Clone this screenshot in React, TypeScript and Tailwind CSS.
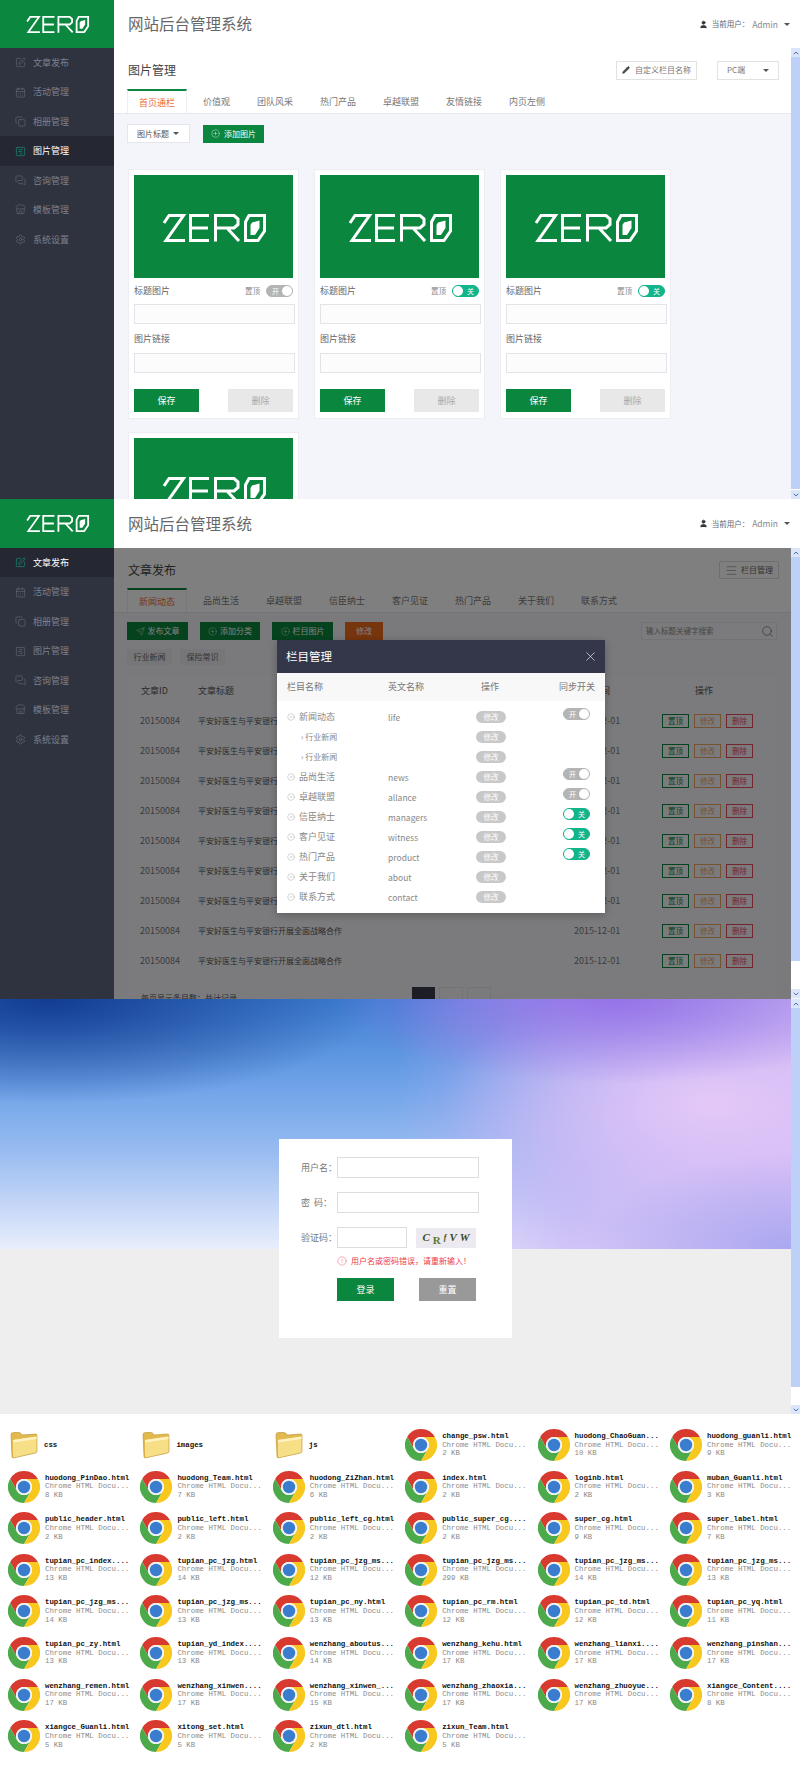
import React from "react";
import {
  SquarePen, CalendarDays, Copy, SquareChartGantt, MessagesSquare, Store, Settings,
  ChevronUp, ChevronDown, User, Pencil, CirclePlus, Send, Search, Menu, X, CircleAlert, CircleDot, CircleMinus,
} from "lucide-react";

const CJK = "font-['Noto_Sans_CJK_SC',sans-serif]";

function Logo({ className }: { className: string }) {
  return (
    <svg viewBox="0 0 104 28" className={className} fill="none" stroke="#fff" strokeWidth="3" strokeLinejoin="miter">
      <path d="M6 1.5H21.5L4 26.5H23" />
      <path d="M7 1.5L2 9" />
      <path d="M47 1.5H28.5V26.5H47M28.5 14H46" />
      <path d="M53.5 27.5V1.5H72L76 5V10.5L72 14H53.5M65 14L77 27" />
      <path d="M87 1.5H102.5V17L96 26.5H83.5V8Z" />
      <path d="M90 8.5L97.5 6.5V14L93 21H88.5V11Z" fill="#fff" stroke="none" />
    </svg>
  );
}

function Caret() {
  return <span className="inline-block border-x-[3px] border-t-[3px] border-x-transparent border-t-[#555]" />;
}

function Scrollbar({ thumb, gapBottom }: { thumb: string; gapBottom?: boolean }) {
  return (
    <div className="flex w-[9px] shrink-0 flex-col bg-[#f4f7fd]">
      <div className="flex h-[9px] items-center justify-center bg-[#dbe6fb]">
        <ChevronUp size={8} strokeWidth={3} className="text-[#4c6fae]" />
      </div>
      <div className={`${thumb} bg-[#bcd0f8]`} />
      <div className="flex-1 bg-white" />
      <div className={`flex h-[9px] items-center justify-center bg-[#dbe6fb] ${gapBottom ? "mb-[1px]" : ""}`}>
        <ChevronDown size={8} strokeWidth={3} className="text-[#4c6fae]" />
      </div>
    </div>
  );
}

const NAV: [string, React.ComponentType<any>][] = [
  ["文章发布", SquarePen],
  ["活动管理", CalendarDays],
  ["相册管理", Copy],
  ["图片管理", SquareChartGantt],
  ["咨询管理", MessagesSquare],
  ["模板管理", Store],
  ["系统设置", Settings],
];

function Sidebar({ active, headHeight }: { active: string; headHeight: string }) {
  return (
    <div className="flex w-[114px] shrink-0 flex-col bg-[#2f3340]">
      <div className={`flex ${headHeight} shrink-0 items-center justify-center bg-[#0b873f]`}>
        <Logo className="h-[17px] w-[65px]" />
      </div>
      <div className="flex flex-col">
        {NAV.map(([name, Icon]) => (
          <div
            key={name}
            className={`flex h-[29.45px] items-center gap-[7px] pl-[15px] text-[9px] ${
              name === active ? "bg-[#252833] text-white" : "text-[#7c808c]"
            }`}
          >
            <Icon size={11} strokeWidth={1.2} className={name === active ? "text-[#14a888]" : "text-[#6e727e]"} />
            <span>{name}</span>
          </div>
        ))}
      </div>
    </div>
  );
}

function Header({ height }: { height: string }) {
  return (
    <div className={`flex ${height} shrink-0 items-center justify-between bg-white pl-[14px] pr-[10px]`}>
      <span className="text-[15.5px] text-[#666]">网站后台管理系统</span>
      <div className="flex items-center text-[7.5px] text-[#666]">
        <User size={9} fill="#333" className="mr-[4px] text-[#333]" />
        <span>当前用户：</span>
        <span className="ml-[3px] mr-[6px] text-[8.5px] text-[#888]">Admin</span>
        <Caret />
      </div>
    </div>
  );
}

function Tabs({ items }: { items: string[] }) {
  return (
    <div className="flex h-[24px] items-end gap-[5px] pl-[13px]">
      {items.map((t, i) => (
        <div
          key={t}
          className={`flex h-[24px] items-center px-[11px] pt-[2px] text-[9px] ${
            i === 0 ? "border-t-2 border-x border-x-[#eeeef2] border-t-[#0b873f] bg-white px-[10px] text-[#ee6a34]" : "text-[#777]"
          }`}
        >
          {t}
        </div>
      ))}
    </div>
  );
}

function Toggle({ on }: { on: boolean }) {
  return on ? (
    <div className="flex h-[12px] w-[27px] items-center justify-between rounded-full border border-[#12b48a] bg-[#12b48a] text-[7px] leading-none text-white">
      <span className="h-[10px] w-[10px] rounded-full bg-white" />
      <span className="pr-[4px]">关</span>
    </div>
  ) : (
    <div className="flex h-[12px] w-[27px] items-center justify-between rounded-full border border-[#b4b4b4] bg-[#b4b4b4] text-[7px] leading-none text-white">
      <span className="pl-[5px]">开</span>
      <span className="h-[10px] w-[10px] rounded-full bg-white" />
    </div>
  );
}

function ImageCard({ on }: { on: boolean }) {
  return (
    <div className="w-[171px] border border-[#ededf3] bg-white px-[5px] pb-[6px] pt-[5px]">
      <div className="flex h-[103px] w-[159px] items-center justify-center bg-[#0b863f] pt-[3px]">
        <Logo className="h-[28px] w-[104px]" />
      </div>
      <div className="flex h-[18px] w-[159px] items-center justify-between pt-[8px] text-[9px] text-[#666]">
        <span>标题图片</span>
        <div className="flex items-center gap-[6px]">
          <span className="text-[7.5px] text-[#888]">置顶</span>
          <Toggle on={on} />
        </div>
      </div>
      <div className="mt-[8px] h-[20px] w-[161px] border border-[#e4e4e8] bg-[#fcfcfd]" />
      <div className="flex h-[29px] items-center text-[9px] text-[#666]">图片链接</div>
      <div className="h-[20px] w-[161px] border border-[#e4e4e8] bg-[#fcfcfd]" />
      <div className="mt-[16px] flex w-[159px] justify-between">
        <div className="flex h-[23px] w-[65px] items-center justify-center bg-[#0b863f] text-[9px] text-white">保存</div>
        <div className="flex h-[23px] w-[65px] items-center justify-center bg-[#e8e8e8] text-[9px] text-[#aaa]">删除</div>
      </div>
    </div>
  );
}

function PicturePage() {
  return (
    <div className={`flex h-[499px] overflow-hidden ${CJK}`}>
      <Sidebar active="图片管理" headHeight="h-[48px]" />
      <div className="flex min-w-0 flex-1 flex-col">
        <Header height="h-[48px]" />
        <div className="flex min-h-0 flex-1">
          <div className="min-w-0 flex-1 overflow-hidden bg-[#f4f5fa]">
            <div className="flex h-[66px] flex-col justify-between border-b border-[#e6e6ee] bg-white">
              <div className="flex items-center justify-between pl-[14px] pr-[12px] pt-[12px]">
                <span className="text-[12px] leading-[20px] text-[#444]">图片管理</span>
                <div className="flex items-center gap-[20px]">
                  <div className="flex h-[19px] w-[81px] items-center justify-center gap-[5px] border border-[#e2e2e2] text-[8px] text-[#777]">
                    <Pencil size={8} fill="#444" className="text-[#444]" />
                    <span>自定义栏目名称</span>
                  </div>
                  <div className="flex h-[19px] w-[62px] items-center justify-between border border-[#e2e2e2] px-[9px] text-[8px] text-[#777]">
                    <span>PC端</span>
                    <Caret />
                  </div>
                </div>
              </div>
              <Tabs items={["首页通栏", "价值观", "团队风采", "热门产品", "卓越联盟", "友情链接", "内页左侧"]} />
            </div>
            <div className="mt-[10px] flex items-center gap-[13px] pl-[13px]">
              <div className="flex h-[19px] w-[63px] items-center justify-between border border-[#e6e6ea] bg-white pl-[9px] pr-[10px] text-[8px] text-[#555]">
                <span>图片标题</span>
                <Caret />
              </div>
              <div className="flex h-[18px] w-[61px] items-center justify-center gap-[4px] bg-[#0b863f] text-[8px] text-white">
                <CirclePlus size={9} strokeWidth={1} />
                <span>添加图片</span>
              </div>
            </div>
            <div className="mt-[26px] flex flex-wrap gap-x-[15px] gap-y-[13px] pl-[14px]">
              <ImageCard on={false} />
              <ImageCard on={true} />
              <ImageCard on={true} />
              <div className="w-[171px] border border-[#ededf3] bg-white px-[5px] pb-[6px] pt-[5px]">
                <div className="flex h-[103px] w-[159px] items-center justify-center bg-[#0b863f] pt-[3px]">
                  <Logo className="h-[28px] w-[104px]" />
                </div>
              </div>
            </div>
          </div>
          <Scrollbar thumb="h-[432px]" />
        </div>
      </div>
    </div>
  );
}

function ActionBtn({ label, className }: { label: string; className: string }) {
  return (
    <span className={`flex h-[14px] w-[27px] items-center justify-center border text-[7.5px] ${className}`}>{label}</span>
  );
}

function ArticlePage() {
  const rows = Array.from({ length: 9 });
  return (
    <div className={`relative flex h-[500px] overflow-hidden ${CJK}`}>
      <Sidebar active="文章发布" headHeight="h-[49px]" />
      <div className="flex min-w-0 flex-1 flex-col">
        <Header height="h-[49px]" />
        <div className="flex min-h-0 flex-1">
          <div className="relative min-w-0 flex-1 overflow-hidden bg-[#f4f5fa]">
            <div className="flex h-[65px] flex-col justify-between border-b border-[#e6e6ee] bg-white">
              <div className="flex items-center justify-between pl-[14px] pr-[12px] pt-[12px]">
                <span className="text-[12px] leading-[20px] text-[#444]">文章发布</span>
                <div className="flex h-[18px] w-[60px] items-center justify-center gap-[3px] rounded-[2px] border border-[#ddd] text-[8px] text-[#666]">
                  <Menu size={13} strokeWidth={1} />
                  <span>栏目管理</span>
                </div>
              </div>
              <Tabs items={["新闻动态", "品尚生活", "卓越联盟", "信臣纳士", "客户见证", "热门产品", "关于我们", "联系方式"]} />
            </div>
            <div className="mt-[9px] flex items-center pl-[13px] pr-[14px]">
              <div className="flex items-center gap-[12px]">
                <div className="flex h-[18px] w-[61px] items-center justify-center gap-[3px] bg-[#0b863f] text-[8px] text-white">
                  <Send size={9} strokeWidth={1} />
                  <span>发布文章</span>
                </div>
                <div className="flex h-[18px] w-[60px] items-center justify-center gap-[3px] bg-[#0b863f] text-[8px] text-white">
                  <CirclePlus size={9} strokeWidth={1} />
                  <span>添加分类</span>
                </div>
                <div className="flex h-[18px] w-[61px] items-center justify-center gap-[3px] bg-[#0b863f] text-[8px] text-white">
                  <CirclePlus size={9} strokeWidth={1} />
                  <span>栏目图片</span>
                </div>
                <div className="flex h-[18px] w-[38px] items-center justify-center bg-[#ee6a1c] text-[8px] text-white">修改</div>
              </div>
              <div className="ml-auto flex h-[18px] w-[136px] items-center justify-between border border-[#e6e6ec] bg-[#f6f6fa] pl-[4px] pr-[2px] text-[7.5px] text-[#888]">
                <span>输入标题关键字搜索</span>
                <Search size={13} strokeWidth={1} className="text-[#444]" />
              </div>
            </div>
            <div className="mt-[9px] flex gap-[8px] pl-[13px]">
              <span className="flex h-[16px] w-[45px] items-center justify-center bg-[#ededf2] text-[8px] text-[#666]">行业新闻</span>
              <span className="flex h-[16px] w-[45px] items-center justify-center bg-[#ededf2] text-[8px] text-[#666]">保险常识</span>
            </div>
            <div className="mx-[13px] mt-[11px] flex flex-col bg-[#f7f7fb] pb-[20px] text-[8px] text-[#555]">
              <div className="flex h-[30px] items-center pl-[14px] text-[9px]">
                <span className="w-[57px]">文章ID</span>
                <span className="w-[376px]">文章标题</span>
                <span className="w-[121px]">发布时间</span>
                <span>操作</span>
              </div>
              {rows.map((_, i) => (
                <div key={i} className="flex h-[30px] items-center pl-[13px]">
                  <span className="w-[58px] text-[9px] text-[#777]">20150084</span>
                  <span className="w-[376px]">平安好医生与平安银行开展全面战略合作</span>
                  <span className="w-[88px] text-[9px] text-[#777]">2015-12-01</span>
                  <div className="flex gap-[5px]">
                    <ActionBtn label="置顶" className="border-[#0b863f] text-[#0b863f]" />
                    <ActionBtn label="修改" className="border-[#e8a860] text-[#e8a860]" />
                    <ActionBtn label="删除" className="border-[#ea4a5a] text-[#ea4a5a]" />
                  </div>
                </div>
              ))}
              <div className="mt-[11px] flex items-start pl-[14px]">
                <span className="w-[271px] pt-[5px]">每页显示条目数：共计记录</span>
                <span className="h-[20px] w-[23px] bg-[#3a3d4a]" />
                <span className="ml-[4px] h-[20px] w-[24px] border border-[#e6e6ec]" />
                <span className="ml-[4px] h-[20px] w-[24px] border border-[#e6e6ec]" />
              </div>
            </div>
            <div className="absolute inset-0 bg-black/50" />
          </div>
          <Scrollbar thumb="h-[404px]" gapBottom />
        </div>
      </div>
      <ColumnModal />
    </div>
  );
}

const MODAL_ROWS: { name: string; en?: string; sub?: boolean; toggle?: boolean; open?: boolean }[] = [
  { name: "新闻动态", en: "life", toggle: false, open: true },
  { name: "行业新闻", sub: true },
  { name: "行业新闻", sub: true },
  { name: "品尚生活", en: "news", toggle: false },
  { name: "卓越联盟", en: "allance", toggle: false },
  { name: "信臣纳士", en: "managers", toggle: true },
  { name: "客户见证", en: "witness", toggle: true },
  { name: "热门产品", en: "product", toggle: true },
  { name: "关于我们", en: "about" },
  { name: "联系方式", en: "contact" },
];

function ColumnModal() {
  return (
    <div className="absolute left-[277px] top-[141px] w-[328px] bg-white shadow-[0_2px_8px_rgba(0,0,0,0.25)]">
      <div className="flex h-[33px] items-center justify-between bg-[#343749] pl-[9px] pr-[7px] text-[11.5px] text-white">
        <span>栏目管理</span>
        <X size={15} strokeWidth={1} />
      </div>
      <div className="flex h-[28px] items-center bg-[#f8f8f8] pl-[10px] text-[9px] text-[#777]">
        <span className="w-[101px]">栏目名称</span>
        <span className="w-[93px]">英文名称</span>
        <span className="w-[78px]">操作</span>
        <span>同步开关</span>
      </div>
      <div className="flex flex-col pb-[6px] pt-[6px]">
        {MODAL_ROWS.map((r, i) => (
          <div key={i} className="flex h-[20px] items-center pl-[10px] text-[9px] text-[#888]">
            {r.sub ? (
              <span className="w-[101px] pl-[14px] text-[8px]">› 行业新闻</span>
            ) : (
              <span className="flex w-[101px] items-center gap-[4px]">
                {r.open || r.name === "联系方式" || r.name === "关于我们" ? (
                  <CircleMinus size={8} strokeWidth={1} />
                ) : (
                  <CircleDot size={8} strokeWidth={1} />
                )}
                <span>{r.name}</span>
              </span>
            )}
            <span className="w-[88px] text-[8.5px]">{r.en}</span>
            <span className="flex h-[12px] w-[30px] items-center justify-center rounded-full bg-[#c8c8c8] text-[7.5px] text-white">修改</span>
            <span className="ml-[57px] -translate-y-[3px]">{r.toggle !== undefined && <Toggle on={r.toggle} />}</span>
          </div>
        ))}
      </div>
    </div>
  );
}

function LoginInput({ label, width }: { label: string; width: string }) {
  return (
    <div className="flex h-[21px] items-center">
      <span className="w-[58px] whitespace-pre pl-[22px] text-[9px] text-[#777]">{label}</span>
      <div className={`h-[21px] ${width} border border-[#dddddd] bg-white`} />
    </div>
  );
}

function LoginPage() {
  return (
    <div className={`flex h-[415px] overflow-hidden ${CJK}`}>
      <div className="min-w-0 flex-1 bg-[#eeeeee] bg-[image:radial-gradient(ellipse_26%_38%_at_100%_100%,#a9a8f0_0%,transparent_100%),radial-gradient(ellipse_36%_34%_at_78%_0%,#9673e8_0%,transparent_100%),radial-gradient(ellipse_34%_52%_at_90%_42%,#e4c8f8_0%,transparent_100%),radial-gradient(ellipse_42%_42%_at_6%_0%,#123c90_0%,transparent_100%),linear-gradient(to_right,transparent_50%,#c5aef5aa_72%,#d6b8f5dd_100%),linear-gradient(to_bottom,#3f7fd2_0%,#6fa3e8_35%,#96bbf0_60%,#c4d6f7_82%,#e8eefc_100%)] bg-[length:100%_250px] bg-no-repeat pl-[279px] pt-[140px]">
        <div className="flex h-[199px] w-[233px] flex-col bg-white pt-[18px]">
          <LoginInput label="用户名：" width="w-[142px]" />
          <div className="mt-[14px]">
            <LoginInput label="密  码：" width="w-[142px]" />
          </div>
          <div className="mt-[14px] flex items-center">
            <LoginInput label="验证码：" width="w-[70px]" />
            <div className="ml-[9px] flex h-[20px] w-[60px] items-center justify-center gap-[3px] bg-[#eceaf0] font-['Liberation_Serif',serif] text-[11px] font-bold italic text-[#3c4a24]">
              <span>C</span>
              <span className="translate-y-[3px] not-italic text-[#5b7a33]">R</span>
              <span className="text-[8px]">f</span>
              <span>V</span>
              <span>W</span>
            </div>
          </div>
          <div className="ml-[58px] mt-[5px] flex h-[16px] items-center gap-[4px] text-[8px] text-[#ee3b48]">
            <CircleAlert size={10} strokeWidth={1} />
            <span>用户名或密码错误，请重新输入！</span>
          </div>
          <div className="ml-[58px] mt-[9px] flex w-[139px] justify-between">
            <div className="flex h-[23px] w-[57px] items-center justify-center bg-[#0b863f] text-[9px] text-white">登录</div>
            <div className="flex h-[23px] w-[57px] items-center justify-center bg-[#999999] text-[9px] text-white">重置</div>
          </div>
        </div>
      </div>
      <Scrollbar thumb="h-[379px]" />
    </div>
  );
}

function ChromeIcon() {
  return (
    <svg viewBox="0 0 32 32" className="h-[32px] w-[32px] shrink-0">
      <path d="M2.14 8A16 16 0 0 1 29.86 8H16A8 8 0 0 0 9.07 20Z" fill="#d93a30" />
      <path d="M16 32A16 16 0 0 1 2.14 8L9.07 20A8 8 0 0 0 22.93 20Z" fill="#4caa4a" />
      <path d="M29.86 8A16 16 0 0 1 16 32L22.93 20A8 8 0 0 0 16 8Z" fill="#f8c81f" />
      <circle cx="16" cy="16" r="8" fill="#f3f3f3" />
      <circle cx="16" cy="16" r="6.2" fill="#3a7dcf" />
    </svg>
  );
}

function FolderIcon() {
  return (
    <svg viewBox="0 0 28 28" className="ml-[2px] h-[28px] w-[28px] shrink-0">
      <path d="M1 4Q1 1.5 3.5 1.5H9Q11 1.5 12 4L25.5 3Q27 3 27 4.5V20Q27 21.5 25.5 22L4 26.8Q2 27.2 2 25.5Z" fill="#e2b94f" stroke="#b98f2c" strokeWidth="0.6" />
      <path d="M3 9L26.5 5.5V20Q26.5 21 25.5 21.5L4.5 26.3Q3 26.6 3 25.2Z" fill="#f7df88" />
      <path d="M3 9L26.5 5.5V8L3 11.5Z" fill="#fff3c2" />
    </svg>
  );
}

const FILES: [string, number][] = [
  ["change_psw.html", 2], ["huodong_ChaoGuan...", 10], ["huodong_guanli.html", 9],
  ["huodong_PinDao.html", 8], ["huodong_Team.html", 7], ["huodong_ZiZhan.html", 6], ["index.html", 2], ["loginb.html", 2], ["muban_Guanli.html", 3],
  ["public_header.html", 2], ["public_left.html", 2], ["public_left_cg.html", 2], ["public_super_cg....", 2], ["super_cg.html", 9], ["super_label.html", 7],
  ["tupian_pc_index....", 13], ["tupian_pc_jzg.html", 14], ["tupian_pc_jzg_ms...", 12], ["tupian_pc_jzg_ms...", 299], ["tupian_pc_jzg_ms...", 14], ["tupian_pc_jzg_ms...", 13],
  ["tupian_pc_jzg_ms...", 14], ["tupian_pc_jzg_ms...", 13], ["tupian_pc_ny.html", 13], ["tupian_pc_rm.html", 12], ["tupian_pc_td.html", 12], ["tupian_pc_yq.html", 11],
  ["tupian_pc_zy.html", 13], ["tupian_yd_index....", 13], ["wenzhang_aboutus...", 14], ["wenzhang_kehu.html", 17], ["wenzhang_lianxi....", 17], ["wenzhang_pinshan...", 17],
  ["wenzhang_remen.html", 17], ["wenzhang_xinwen....", 17], ["wenzhang_xinwen_...", 15], ["wenzhang_zhaoxia...", 17], ["wenzhang_zhuoyue...", 17], ["xiangce_Content....", 8],
  ["xiangce_Guanli.html", 5], ["xitong_set.html", 5], ["zixun_dtl.html", 2], ["zixun_Team.html", 5],
];

function FileList() {
  return (
    <div className="grid h-[352px] grid-cols-[repeat(6,132.4px)] auto-rows-[41.6px] bg-white pl-[8px] pt-[15px] font-['Liberation_Mono',monospace] text-[7.4px] leading-[8.7px]">
      {["css", "images", "js"].map((n) => (
        <div key={n} className="flex h-[32px] items-center gap-[6px]">
          <FolderIcon />
          <span className="font-bold text-[#111]">{n}</span>
        </div>
      ))}
      {FILES.map(([n, kb], i) => (
        <div key={i} className="flex h-[32px] items-center gap-[5px]">
          <ChromeIcon />
          <div className="flex flex-col whitespace-pre">
            <span className="font-bold text-[#111]">{n}</span>
            <span className="text-[#8a8a8a]">Chrome HTML Docu...</span>
            <span className="text-[#8a8a8a]">{kb} KB</span>
          </div>
        </div>
      ))}
    </div>
  );
}

export default function App() {
  return (
    <div className="flex w-[800px] flex-col">
      <PicturePage />
      <ArticlePage />
      <LoginPage />
      <FileList />
    </div>
  );
}
